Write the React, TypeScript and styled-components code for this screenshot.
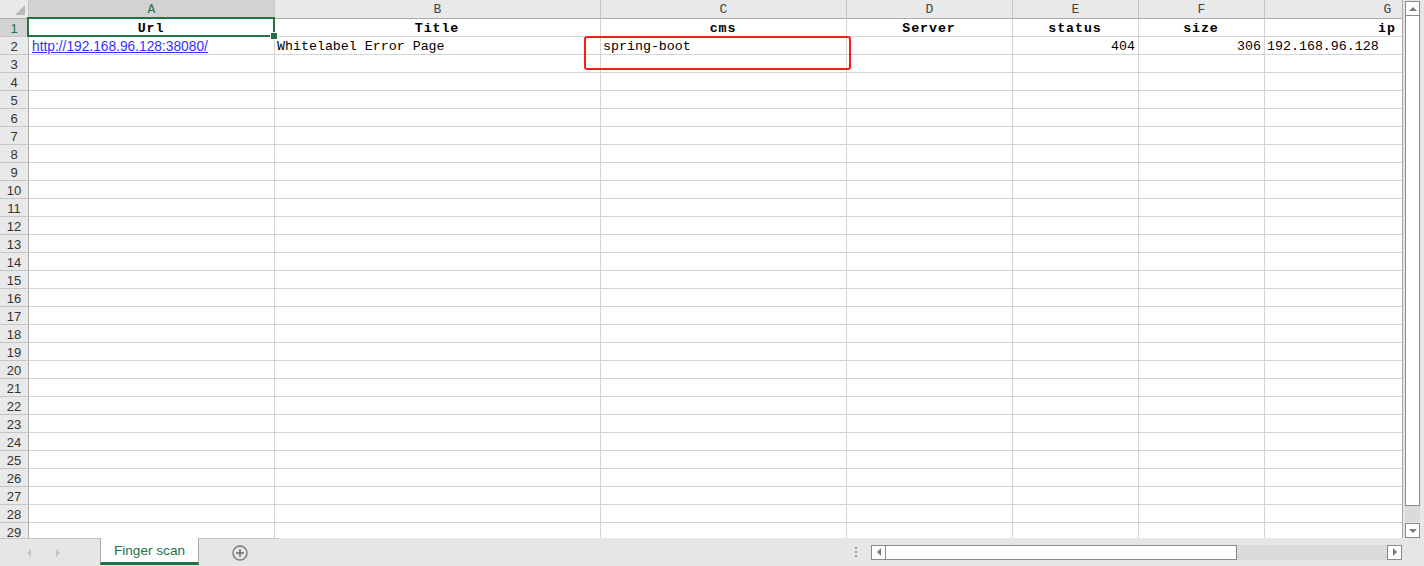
import React from "react";
import styled, { createGlobalStyle, css } from "styled-components";

const GlobalStyle = createGlobalStyle`
  html, body { margin: 0; padding: 0; background: #e6e6e6; }
  * { box-sizing: border-box; }
`;

const GREEN = "#217346";
const GRID = "#d4d4d4";
const HEAD_BG = "#e9e9e9";
const HEAD_LINE = "#c6c6c6";

const Window = styled.div`
  width: 1424px;
  height: 566px;
  display: flex;
  flex-direction: column;
  overflow: hidden;
  background: #e6e6e6;
`;

const Main = styled.div`
  display: flex;
  height: 538px;
`;

const SheetArea = styled.div`
  position: relative;
  width: 1403px;
  height: 538px;
  overflow: hidden;
  background: #fff;
  border-right: 1px solid #a8a8a8;
`;

const Grid = styled.div<{ $cols: string }>`
  display: grid;
  grid-template-columns: ${(p) => p.$cols};
  grid-template-rows: 19px;
  grid-auto-rows: 18px;
  width: max-content;
`;

const Corner = styled.div`
  position: relative;
  background: ${HEAD_BG};
  border-right: 1px solid ${HEAD_LINE};
  border-bottom: 1px solid #ababab;
  display: flex;
  align-items: flex-end;
  justify-content: flex-end;
  padding: 0 3px 3px 0;
`;

const ColHead = styled.div<{ $sel?: boolean }>`
  background: ${(p) => (p.$sel ? "#d2d2d2" : HEAD_BG)};
  border-right: 1px solid ${HEAD_LINE};
  border-bottom: 1px solid ${(p) => (p.$sel ? GREEN : "#ababab")};
  color: ${(p) => (p.$sel ? GREEN : "#444")};
  font-family: "Liberation Mono", "DejaVu Sans Mono", monospace;
  font-size: 13px;
  display: flex;
  align-items: center;
  justify-content: center;
  line-height: 1;
`;

const RowHead = styled.div<{ $sel?: boolean }>`
  background: ${(p) => (p.$sel ? "#d2d2d2" : HEAD_BG)};
  border-right: 1px solid ${(p) => (p.$sel ? GREEN : "#ababab")};
  border-bottom: 1px solid ${HEAD_LINE};
  color: ${(p) => (p.$sel ? GREEN : "#333")};
  font-family: "Liberation Sans", Arial, sans-serif;
  font-size: 13px;
  display: flex;
  align-items: center;
  justify-content: center;
  padding-top: 1px;
`;

type Align = "left" | "center" | "right";

const Cell = styled.div<{ $align?: Align; $bold?: boolean; $active?: boolean }>`
  position: relative;
  border-right: 1px solid ${GRID};
  border-bottom: 1px solid ${GRID};
  font-family: "Liberation Mono", "DejaVu Sans Mono", monospace;
  font-size: 13.3px;
  font-weight: ${(p) => (p.$bold ? 700 : 400)};
  letter-spacing: ${(p) => (p.$bold ? "0.9px" : "0")};
  color: #000;
  display: flex;
  align-items: center;
  padding: 1px 3px 0 2px;
  white-space: nowrap;
  overflow: visible;
  justify-content: ${(p) =>
    p.$align === "center" ? "center" : p.$align === "right" ? "flex-end" : "flex-start"};
  ${(p) =>
    p.$active &&
    css`
      &::after {
        content: "";
        position: absolute;
        left: -2px;
        top: -2px;
        right: -1px;
        bottom: -1px;
        border: 2px solid ${GREEN};
        pointer-events: none;
        z-index: 2;
      }
      &::before {
        content: "";
        position: absolute;
        right: -4px;
        bottom: -4px;
        width: 6px;
        height: 6px;
        background: ${GREEN};
        border: 1px solid #fff;
        z-index: 3;
      }
    `}
`;

const Link = styled.a`
  font-family: "Liberation Sans", Arial, sans-serif;
  font-size: 13.75px;
  color: #3232ff;
  text-decoration: underline;
  padding-left: 1px;
`;

const Annotation = styled.div`
  position: absolute;
  left: 584px;
  top: 36px;
  width: 267px;
  height: 34px;
  border: 2px solid #ff1a1a;
  border-radius: 3px;
  pointer-events: none;
`;

/* vertical scrollbar */
const VScroll = styled.div`
  width: 21px;
  display: flex;
  flex-direction: column;
  padding: 1px 3px 0 2px;
  background: #e6e6e6;
`;

const ScrollBtn = styled.div<{ $w?: number; $h?: number }>`
  width: ${(p) => p.$w ?? 15}px;
  height: ${(p) => p.$h ?? 15}px;
  flex: none;
  background: #fff;
  border: 1px solid #8a8a8a;
  display: flex;
  align-items: center;
  justify-content: center;
`;

const Tri = styled.span<{ $dir: "up" | "down" | "left" | "right"; $color?: string; $size?: number }>`
  width: 0;
  height: 0;
  border-style: solid;
  ${(p) => {
    const s = p.$size ?? 4;
    const c = p.$color ?? "#7a7a7a";
    switch (p.$dir) {
      case "up":
        return css`border-width: 0 ${s}px ${s}px ${s}px; border-color: transparent transparent ${c} transparent;`;
      case "down":
        return css`border-width: ${s}px ${s}px 0 ${s}px; border-color: ${c} transparent transparent transparent;`;
      case "left":
        return css`border-width: ${s}px ${s}px ${s}px 0; border-color: transparent ${c} transparent transparent;`;
      default:
        return css`border-width: ${s}px 0 ${s}px ${s}px; border-color: transparent transparent transparent ${c};`;
    }
  }}
`;

const VThumb = styled.div`
  height: 490px;
  width: 15px;
  background: #fff;
  border: 1px solid #8a8a8a;
  border-top: none;
  flex: none;
`;

const VTrack = styled.div`
  flex: 1;
  width: 15px;
  background: #dadada;
  margin-bottom: 1px;
`;

/* bottom bar */
const BottomBar = styled.div`
  height: 28px;
  display: flex;
  align-items: stretch;
  background: #e6e6e6;
`;

const NavArea = styled.div`
  width: 100px;
  display: flex;
  align-items: center;
  padding-left: 27px;
  gap: 25px;
  border-top: 1px solid #c6c6c6;
`;

const Tab = styled.div`
  width: 99px;
  background: #fff;
  border-left: 1px solid #a8a8a8;
  border-right: 1px solid #a8a8a8;
  border-bottom: 3px solid ${GREEN};
  color: ${GREEN};
  font-family: "Liberation Sans", Arial, sans-serif;
  font-size: 13.6px;
  display: flex;
  align-items: center;
  justify-content: center;
  padding-top: 1px;
  margin-bottom: 1px;
`;

const AddArea = styled.div`
  width: 80px;
  display: flex;
  align-items: center;
  padding-left: 33px;
  border-top: 1px solid #c6c6c6;
`;

const Spacer = styled.div`
  flex: 1;
  display: flex;
  align-items: center;
  justify-content: flex-end;
  padding-right: 14px;
`;

const Dots = styled.div`
  width: 2px;
  height: 10px;
  background: repeating-linear-gradient(to bottom, #9a9a9a 0 2px, transparent 2px 4px);
`;

const HScroll = styled.div`
  width: 531px;
  display: flex;
  align-items: center;
  margin-right: 22px;
`;

const HThumb = styled.div`
  width: 351px;
  height: 15px;
  background: #fff;
  border: 1px solid #8a8a8a;
  border-left: none;
`;

const HTrack = styled.div`
  flex: 1;
  height: 15px;
  background: #dadada;
`;

const cols = [
  { key: "A", w: 246 },
  { key: "B", w: 326 },
  { key: "C", w: 246 },
  { key: "D", w: 166 },
  { key: "E", w: 126 },
  { key: "F", w: 126 },
  { key: "G", w: 246 },
];

type CellData = { text?: React.ReactNode; align?: Align; bold?: boolean };

const rows: Record<number, CellData[]> = {
  1: [
    { text: "Url", align: "center", bold: true },
    { text: "Title", align: "center", bold: true },
    { text: "cms", align: "center", bold: true },
    { text: "Server", align: "center", bold: true },
    { text: "status", align: "center", bold: true },
    { text: "size", align: "center", bold: true },
    { text: "ip", align: "center", bold: true },
  ],
  2: [
    { text: <Link href="#">http://192.168.96.128:38080/</Link> },
    { text: "Whitelabel Error Page" },
    { text: "spring-boot" },
    { text: "" },
    { text: "404", align: "right" },
    { text: "306", align: "right" },
    { text: "192.168.96.128" },
  ],
};

export default function App() {
  const template = ["29px", ...cols.map((c) => `${c.w}px`)].join(" ");
  const rowNums = Array.from({ length: 30 }, (_, i) => i + 1);
  return (
    <>
      <GlobalStyle />
      <Window>
        <Main>
          <SheetArea>
            <Grid $cols={template}>
              <Corner>
                <svg width="10" height="10" viewBox="0 0 10 10">
                  <polygon points="10,0 10,10 0,10" fill="#b9b9b9" />
                </svg>
              </Corner>
              {cols.map((c) => (
                <ColHead key={c.key} $sel={c.key === "A"}>
                  {c.key}
                </ColHead>
              ))}
              {rowNums.map((r) => (
                <React.Fragment key={r}>
                  <RowHead $sel={r === 1}>{r}</RowHead>
                  {cols.map((c, ci) => {
                    const d = rows[r]?.[ci];
                    return (
                      <Cell
                        key={c.key}
                        $align={d?.align}
                        $bold={d?.bold}
                        $active={r === 1 && ci === 0}
                      >
                        {d?.text}
                      </Cell>
                    );
                  })}
                </React.Fragment>
              ))}
            </Grid>
            <Annotation />
          </SheetArea>
          <VScroll>
            <ScrollBtn $h={15}>
              <Tri $dir="up" $size={4} />
            </ScrollBtn>
            <VThumb />
            <VTrack />
            <ScrollBtn $h={15}>
              <Tri $dir="down" $size={4} />
            </ScrollBtn>
          </VScroll>
        </Main>
        <BottomBar>
          <NavArea>
            <Tri $dir="left" $size={4} $color="#c4c4c4" />
            <Tri $dir="right" $size={4} $color="#c4c4c4" />
          </NavArea>
          <Tab>Finger scan</Tab>
          <AddArea>
            <svg width="16" height="16" viewBox="0 0 16 16">
              <circle cx="8" cy="8" r="7" fill="none" stroke="#7a7a7a" strokeWidth="1.4" />
              <line x1="8" y1="4.2" x2="8" y2="11.8" stroke="#7a7a7a" strokeWidth="1.8" />
              <line x1="4.2" y1="8" x2="11.8" y2="8" stroke="#7a7a7a" strokeWidth="1.8" />
            </svg>
          </AddArea>
          <Spacer>
            <Dots />
          </Spacer>
          <HScroll>
            <ScrollBtn $w={15} $h={15}>
              <Tri $dir="left" $size={4} />
            </ScrollBtn>
            <HThumb />
            <HTrack />
            <ScrollBtn $w={15} $h={15}>
              <Tri $dir="right" $size={4} />
            </ScrollBtn>
          </HScroll>
        </BottomBar>
      </Window>
    </>
  );
}
